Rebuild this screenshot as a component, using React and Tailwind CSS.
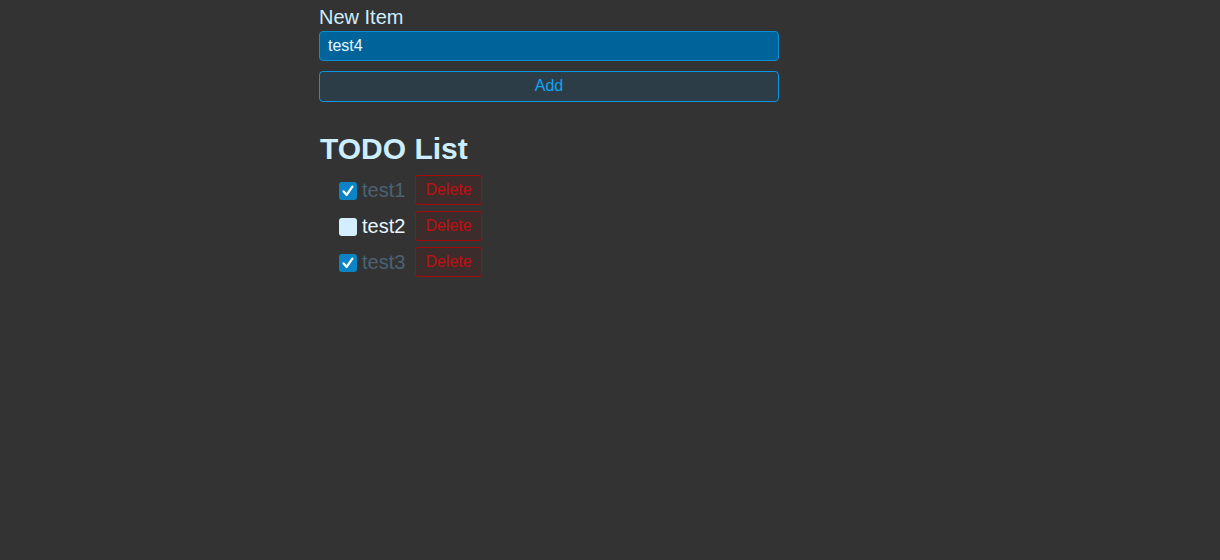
import React from "react";

const items = [
  { id: 1, text: "test1", done: true },
  { id: 2, text: "test2", done: false },
  { id: 3, text: "test3", done: true },
];

function Check({ checked }) {
  if (!checked) {
    return <span className="mt-[1px] inline-block h-[18px] w-[18px] rounded-[3px] bg-[#d3efff]" />;
  }
  return (
    <span className="mt-[1px] inline-flex h-[18px] w-[18px] items-center justify-center rounded-[3px] bg-[#0a84c6]">
      <svg viewBox="0 0 16 16" className="h-[14px] w-[14px]">
        <path d="M3 8.5 L6.5 12.5 L13 3" fill="none" stroke="#ffffff" strokeWidth="2.6" strokeLinecap="round" strokeLinejoin="round" />
      </svg>
    </span>
  );
}

export default function App() {
  return (
    <div className="min-h-[560px] w-full bg-[#333333] font-['Liberation_Sans',Arial,sans-serif]">
      <div className="ml-[319px] w-[460px] pt-[6px]">
        <label className="block text-[20px] leading-[23px] text-[#cdeeff]">New Item</label>
        <input
          defaultValue="test4"
          className="mt-[2px] block h-[30px] w-full rounded-[4px] border border-[#0b8fd4] bg-[#00649a] px-[8px] text-[16px] text-[#e6f6ff] outline-none"
        />
        <button className="mt-[10px] block h-[31px] w-full rounded-[4px] border border-[#0b96e0] bg-[#2d3d47] pb-[1px] text-[16px] text-[#0ba5f5]">
          Add
        </button>

        <h1 className="mt-[30px] pl-[1px] text-[30px] font-bold leading-[34px] text-[#cdeeff]">TODO List</h1>

        <ul className="mt-[9px] flex flex-col gap-[6px] pl-[20px]">
          {items.map((item) => (
            <li key={item.id} className="flex h-[30px] items-center">
              <Check checked={item.done} />
              <span
                className={
                  "ml-[5px] w-[48px] text-[20px] " + (item.done ? "text-[#4b6272]" : "text-[#e8f7ff]")
                }
              >
                {item.text}
              </span>
              <button className="ml-[5px] h-[30px] w-[67px] rounded-[3px] border border-[#a80a0a] bg-[#3d2c2c] pb-[1px] text-[16px] text-[#c10f0f]">
                Delete
              </button>
            </li>
          ))}
        </ul>
      </div>
    </div>
  );
}
